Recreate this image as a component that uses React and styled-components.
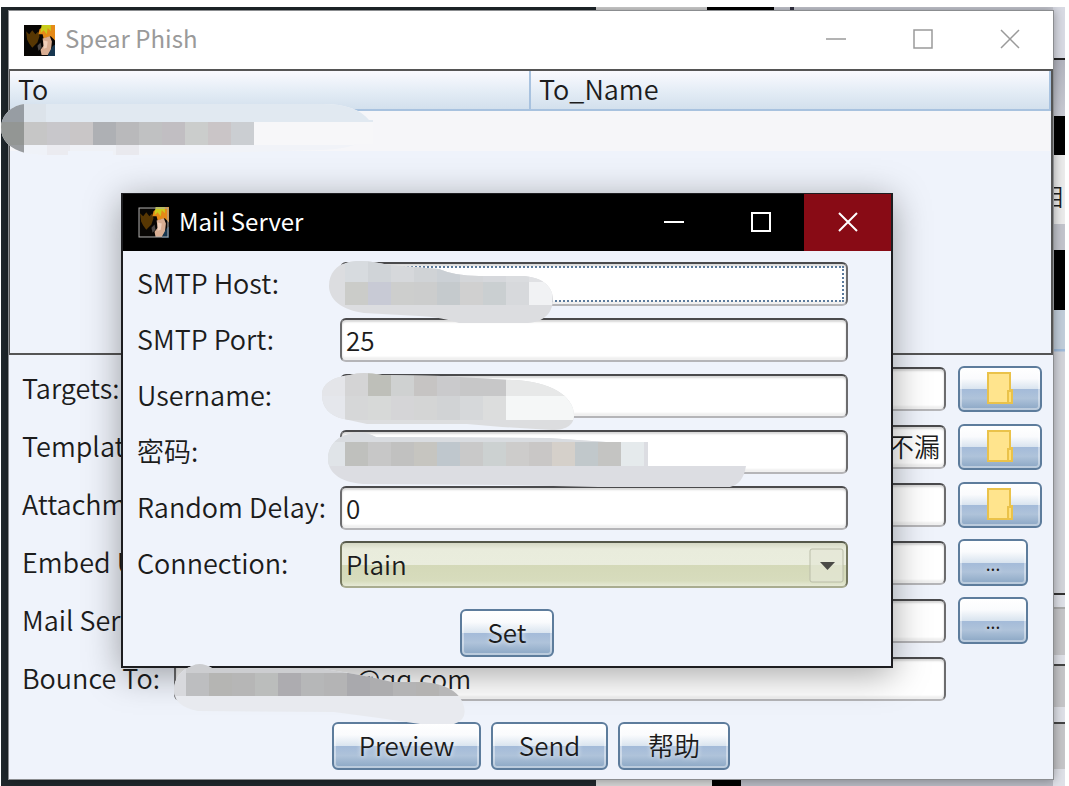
import React from "react";
import styled, { createGlobalStyle, css } from "styled-components";

const GlobalStyle = createGlobalStyle`
  * { box-sizing: border-box; }
  body { margin: 0; background: #fff; }
  body, button, input, select {
    font-family: "Noto Sans CJK SC", "Noto Sans", sans-serif;
    font-size: 26px;
    font-weight: 350;
    color: #1c1c1c;
  }
`;

const Desktop = styled.div`
  position: relative;
  min-height: calc(100vh - 7px);
  margin: 7px 4px 0 1px;
  padding: 3px 11px 6px 7px;
  overflow: hidden;
  background: linear-gradient(90deg, #20282c 595px, #d6d6d6 595px 711px, #000 711px 740px, #b9bbc4 740px);
`;

const BackdropTop = styled.div`
  position: absolute;
  top: 0;
  left: 0;
  right: 0;
  height: 3px;
  background: linear-gradient(90deg, #20282c 595px, #d6d6d6 595px 706px, #000 706px 773px, #c9cbd4 773px 789px, #334 789px 793px, #c9cbd4 793px);
`;

const BackdropEdge = styled.div`
  position: absolute;
  top: 0;
  right: 0;
  bottom: 0;
  width: 12px;
  background: linear-gradient(
    #d9dbe4 51px, #222 51px 53px, #b3b5bf 53px, #c9cbd4 109px,
    #000 109px 148px, #ececec 148px 217px, #c3c5cd 217px 243px,
    #000 243px 303px, #c2cedb 303px 342px, #9fbbdb 342px 344px,
    #d3d5db 345px 586px, #333 586px 588px, #dfe1e8 588px 600px,
    #aaa 600px 602px, #c6c6c9 602px 648px, #dfe1e8 648px 657px,
    #444 657px 659px, #c6c6c9 659px 700px, #dfe1e8 700px 715px,
    #444 715px 717px, #c6c6c9 717px 762px, #dfe1e8 762px
  );
`;

const BackdropText = styled.span`
  position: absolute;
  top: 177px;
  right: 2px;
  font-size: 24px;
  line-height: 24px;
`;

const Window = styled.section`
  position: relative;
  min-height: 770px;
  border: 1px solid #8b8d90;
  background: #eff3fb;
  box-shadow: 0 0 10px rgba(0, 0, 0, 0.35);
`;

const TitleBar = styled.header`
  display: flex;
  align-items: center;
  height: ${(p) => (p.$dark ? 57 : 58)}px;
  padding-left: 15px;
  background: ${(p) => (p.$dark ? "#000" : "#fff")};
  color: ${(p) => (p.$dark ? "#fff" : "#9a9a9a")};
`;

const Title = styled.h1`
  flex: 1;
  margin: 0 0 0 10px;
  padding-bottom: 4px;
  font-size: 24px;
  font-weight: 400;
  line-height: 32px;
`;

const CaptionButton = styled.button`
  display: flex;
  align-items: center;
  justify-content: center;
  align-self: stretch;
  width: 87px;
  padding: 0 0 2px;
  border: 0;
  background: ${(p) => (p.$danger ? "#880b15" : "transparent")};
  color: inherit;
`;

const Targets = styled.div`
  height: 286px;
  border: 1px solid #555;
  border-width: 2px 2px 2px 1px;
`;

const TargetTable = styled.table`
  width: 100%;
  border-collapse: collapse;
  table-layout: fixed;
`;

const HeadCell = styled.th`
  height: 39px;
  padding: 0 8px 3px;
  border-right: 2px solid #a8c2df;
  border-bottom: 2px solid #a8c2df;
  background: linear-gradient(#fafaff, #e3ecf5 55%, #d3e0ed);
  font-size: 27px;
  font-weight: 350;
  line-height: 34px;
  text-align: left;
`;

const Cell = styled.td`
  height: 41px;
  padding: 0;
  background: #f6f6f9;
`;

const Form = styled.form`
  display: grid;
  ${(p) =>
    p.$dialog
      ? css`
          grid-template-columns: 191px 1fr;
          grid-auto-rows: 44px;
          gap: 12px;
          padding: 11px 43px 0 14px;
        `
      : css`
          grid-template-columns: 140px 1fr 84px;
          grid-auto-rows: 47px;
          gap: 11px 12px;
          padding: 10px 11px 0 13px;
        `}
  align-items: center;
`;

const Label = styled.label`
  padding-bottom: 2px;
  font-size: 27px;
  line-height: 36px;
  white-space: nowrap;
`;

const Field = styled.div`
  position: relative;
  ${(p) =>
    p.$focused &&
    css`
      &::after {
        content: "";
        position: absolute;
        inset: 4px;
        border: 2px dotted #5b7a9c;
        pointer-events: none;
      }
    `}
`;

const box = css`
  display: block;
  width: 100%;
  border: 2px solid #6c6c6e;
  border-top-color: #4a4a4c;
  border-bottom-color: #b5b5b8;
  border-radius: 6px;
  outline: 0;
`;

const Input = styled.input`
  ${box}
  height: 44px;
  padding: 0 4px 2px ${(p) => p.$indent || 4}px;
  background: #fff;
  box-shadow: inset 0 2px 2px #d8d8d8, inset 0 -3px 2px #f0f0f0;
  text-align: ${(p) => p.$align || "left"};
`;

const Select = styled.select`
  ${box}
  height: 47px;
  padding: 0 44px 2px 4px;
  appearance: none;
  border-color: #55584a #74775f #a9ac90;
  background: linear-gradient(#d5d8c4, #e9ecdc 6px, #eaeddd 52%, #d4d9b8 52%, #d7dcbd 88%, #e6e9d6);
`;

const Arrow = styled.svg`
  position: absolute;
  top: 7px;
  right: 4px;
  pointer-events: none;
`;

const Button = styled.button`
  display: flex;
  align-items: center;
  justify-content: center;
  width: ${(p) => p.$width}px;
  height: ${(p) => p.$height || 48}px;
  padding: 0 0 2px;
  border: 2px solid #5d7c9c;
  border-radius: 6px;
  background: linear-gradient(#fff, #fafbfd 25%, #d9e4ef 50%, #a4bbd9 51%, #afc3da 72%, #8aa6c4);
  box-shadow: inset 0 0 0 2px rgba(255, 255, 255, 0.4);
  line-height: 36px;
  text-shadow: 0 0 5px rgba(255, 255, 255, 0.9);
`;

const Dots = styled.span`
  padding-top: 4px;
  font-size: 18px;
  font-family: "Noto Sans", sans-serif;
  font-weight: 400;
`;

const Actions = styled.div`
  display: flex;
  justify-content: center;
  gap: 10px;
  padding-top: ${(p) => (p.$dialog ? 23 : 20)}px;
`;

const Dialog = styled.section`
  position: absolute;
  z-index: 1;
  top: 182px;
  left: 112px;
  right: 160px;
  height: 475px;
  border: 2px solid #1d1d20;
  border-top-width: 1px;
  background: #eff3fb;
  box-shadow: 0 6px 34px rgba(0, 0, 0, 0.36);
`;

const SmudgeSvg = styled.svg`
  position: absolute;
  z-index: 2;
  left: ${(p) => p.$left}px;
  top: ${(p) => p.$top}px;
  pointer-events: none;
`;

function Smudge({ id, left, top, width, height, outline, base, rows }) {
  return (
    <SmudgeSvg $left={left} $top={top} width={width} height={height} aria-hidden="true">
      <clipPath id={id}>
        <path d={outline} />
      </clipPath>
      <g clipPath={`url(#${id})`} shapeRendering="crispEdges">
        <rect width={width} height={height} fill={base} />
        {rows.map((row) =>
          row.colors.map((color, i) => (
            <rect
              key={`${row.y}-${i}`}
              x={row.x + i * row.step}
              y={row.y}
              width={row.step}
              height={row.h}
              fill={color}
            />
          ))
        )}
      </g>
    </SmudgeSvg>
  );
}

const smudges = {
  target: {
    left: -8, top: 92, width: 372, height: 52, base: "#f1f3f8",
    outline: "M24 1H322C345 1 360 7 368 17H372V41H355Q345 46 320 47L134 52H112V48H67V52H45L24 50C10 46 0 38 0 25C0 12 11 2 24 1Z",
    rows: [
      { x: 0, y: 0, step: 23, h: 19, colors: ["#979da3", "#dce3ea"] },
      { x: 45, y: 0, step: 327, h: 19, colors: ["#e1e9f1"] },
      { x: 250, y: 19, step: 122, h: 23, colors: ["#f7f7f9"] },
      { x: 0, y: 19, step: 23, h: 23, colors: ["#939694", "#c6c6c6", "#c8c7cb", "#c9c6c7", "#aeb0b4", "#b9b9bb", "#c0c1c2", "#c1bec2", "#cbcdcc", "#cac5c7", "#cbced2"] },
      { x: 0, y: 42, step: 23, h: 10, colors: ["#999c9f", "#eff2f8", "#ebebf0", "#eff1f6", "#eff1f6", "#e9e9ee"] },
    ],
  },
  host: {
    left: -11, top: -1, width: 225, height: 64, base: "#dcdde0",
    outline: "M17 2C30 -2 45 1 60 4L110 8Q126 15 150 15H192C210 15 224 24 224 38C224 54 212 62 196 62H130Q112 56 90 55L35 52C12 49 0 38 0 25C0 12 8 4 17 2Z",
    rows: [
      { x: 16, y: 0, step: 23, h: 21, colors: ["#d7dbdf", "#d0d4d8", "#d6d8db", "#d0d3d6", "#cbd0d5", "#d4d6d9", "#d6d8dc", "#dadcdf", "#e0e1e4"] },
      { x: 16, y: 21, step: 23, h: 23, colors: ["#cbccc9", "#c8cad5", "#cdcecd", "#cccdcd", "#c5cacd", "#d0d0d0", "#cacfd1", "#d7d9dc", "#f1f2f4"] },
    ],
  },
  user: {
    left: -18, top: -2, width: 254, height: 64, base: "#dcdddf",
    outline: "M28 3Q40 -1 60 3L120 4L190 8C228 9 252 24 252 43C252 52 246 58 230 58L180 55L145 52H45L22 47C8 44 0 36 0 23C0 12 10 5 28 3Z",
    rows: [
      { x: 0, y: 0, step: 23, h: 24, colors: ["#e4e5e9", "#d4d4d5", "#bebfb9", "#cfd1d1", "#c6c4c3", "#cacacc", "#c7c7c8", "#c7c7c8", "#e7e8e8", "#e7e8e8", "#e7e8e8"] },
      { x: 0, y: 24, step: 23, h: 24, colors: ["#e5e7ec", "#d6d7d8", "#d7d9d8", "#d5d5d7", "#d4d5d5", "#d1d3d5", "#d6d8da", "#dcdddd", "#f5f7f7", "#f5f7f7", "#f5f7f7"] },
    ],
  },
  password: {
    left: -12, top: 1, width: 420, height: 58, base: "#dcdde2",
    outline: "M22 3Q34 -1 48 6L220 7L278 11H320V35H418C416 48 410 54 402 56H270L180 54L35 53C10 51 0 40 0 28C0 14 10 5 22 3Z",
    rows: [
      { x: 0, y: 0, step: 400, h: 11, colors: ["#d9dce0"] },
      { x: 0, y: 11, step: 17, h: 24, colors: ["#e0e4e8"] },
      { x: 17, y: 11, step: 23, h: 24, colors: ["#bfc0bd", "#c7c7c7", "#c1c1c0", "#c6c5c0", "#bfc7cd", "#c9c9c9", "#ccd1d1", "#cdcccb", "#c9c7c6", "#d5d0ca", "#c1c8cb", "#c4c4c2", "#e5eaec"] },
    ],
  },
  bounce: {
    left: 0, top: 6, width: 292, height: 62, base: "#e8eaef",
    outline: "M18 3Q26 -2 38 5L150 6Q190 12 218 19H250Q280 22 288 38Q296 56 280 61H246L205 55L160 49L24 48C8 45 0 38 0 27C0 15 8 6 18 3Z",
    rows: [
      { x: 0, y: 0, step: 12, h: 33, colors: ["#d8d9dd"] },
      { x: 12, y: 0, step: 160, h: 10, colors: ["#cccdd0"] },
      { x: 12, y: 10, step: 23, h: 23, colors: ["#bdbec0", "#b5b5b3", "#b6b6b6", "#bbbdbc", "#adacb0", "#b6b7b8", "#b4b4b5", "#a9a9ad", "#adadaf", "#b4b4b5", "#b4b3b2", "#b7b7b8"] },
    ],
  },
};

function Avatar({ framed }) {
  return (
    <svg width="31" height="31" viewBox="0 0 30 30" aria-hidden="true">
      <rect width="30" height="30" fill="#080604" />
      <path d="M2 6L5 9L8 5L11 9L14 6L15 11L13 17L8 22L5 18L3 14Z" fill="#573703" />
      <path d="M15 4L20 0H30V15L26 11L19 13L18 9L14 9Z" fill="#e58a18" />
      <path d="M17 0H26V6L23 3L22 9L19 5L16 8Z" fill="#c9cc1c" />
      <path d="M18 13L25 11L27 16L26 25L23 29H17L16 24L19 20Z" fill="#d9ae93" />
      <path d="M19 15L23 16L22 22L19 23Z" fill="#efcfba" />
      <path d="M24 27L28 20L30 19V30H23Z" fill="#173750" />
      <path d="M13 20L16 17L17 22L14 25Z" fill="#4d4846" />
      {framed && <rect x="1" y="1" width="28" height="28" fill="none" stroke="#aaa" />}
    </svg>
  );
}

const captionPaths = {
  Minimize: "M1 11H21",
  Maximize: "M2 2H20V20H2Z",
  Close: "M2 2L20 20M20 2L2 20",
};

function Caption({ title, dark }) {
  return (
    <TitleBar $dark={dark}>
      <Avatar framed={dark} />
      <Title>{title}</Title>
      {Object.entries(captionPaths).map(([name, d]) => (
        <CaptionButton key={name} type="button" aria-label={name} $danger={dark && name === "Close"}>
          <svg width="22" height="22" viewBox="0 0 22 22" fill="none" stroke="currentColor" strokeWidth={dark ? 2 : 1.5}>
            <path d={d} />
          </svg>
        </CaptionButton>
      ))}
    </TitleBar>
  );
}

function FolderIcon() {
  return (
    <svg width="26" height="32" viewBox="0 0 26 32" aria-hidden="true">
      <path d="M1 1H23V18H25V31H1Z" fill="#ffe48d" stroke="#eac24a" strokeWidth="2" />
      <rect x="21" y="19" width="4" height="12" fill="#ffe07a" stroke="#eac24a" strokeWidth="2" />
    </svg>
  );
}

const messageFields = [
  { id: "targets", label: "Targets:", browse: "folder" },
  { id: "template", label: "Template:", browse: "folder", value: "不漏", align: "right" },
  { id: "attachment", label: "Attachment:", browse: "folder" },
  { id: "embed", label: "Embed URL:", browse: "dots" },
  { id: "mail", label: "Mail Server:", browse: "dots" },
  { id: "bounce", label: "Bounce To:", value: "@qq.com", indent: 180, smudge: "bounce" },
];

const serverFields = [
  { id: "host", label: "SMTP Host:", smudge: "host", focused: true },
  { id: "port", label: "SMTP Port:", value: "25" },
  { id: "user", label: "Username:", smudge: "user" },
  { id: "password", label: "密码:", smudge: "password" },
  { id: "delay", label: "Random Delay:", value: "0" },
];

function FormField({ id, label, value = "", align, indent, smudge, focused }) {
  return (
    <>
      <Label htmlFor={id}>{label}</Label>
      <Field $focused={focused}>
        <Input id={id} type="text" defaultValue={value} $align={align} $indent={indent} />
        {smudge && <Smudge {...smudges[smudge]} id={`smudge-${smudge}`} />}
      </Field>
    </>
  );
}

function MailServerDialog() {
  return (
    <Dialog role="dialog" aria-label="Mail Server">
      <Caption title="Mail Server" dark />
      <Form $dialog>
        {serverFields.map((f) => (
          <FormField key={f.id} {...f} />
        ))}
        <Label htmlFor="connection">Connection:</Label>
        <Field>
          <Select id="connection" defaultValue="Plain">
            <option>Plain</option>
          </Select>
          <Arrow width="35" height="35" viewBox="0 0 35 35" aria-hidden="true">
            <rect x="1" y="1" width="33" height="33" rx="2" fill="#e4e7d6" fillOpacity="0.7" stroke="#babda8" />
            <path d="M11 14H26L18.500 22Z" fill="#4a4a46" />
          </Arrow>
        </Field>
      </Form>
      <Actions $dialog>
        <Button type="button" $width={94}>Set</Button>
      </Actions>
    </Dialog>
  );
}

export default function App() {
  return (
    <>
      <GlobalStyle />
      <Desktop>
        <BackdropTop />
        <BackdropEdge>
          <BackdropText>相</BackdropText>
        </BackdropEdge>
        <Window>
          <Caption title="Spear Phish" />
          <Targets>
            <TargetTable>
              <thead>
                <tr>
                  <HeadCell scope="col">To</HeadCell>
                  <HeadCell scope="col">To_Name</HeadCell>
                </tr>
              </thead>
              <tbody>
                <tr>
                  <Cell />
                  <Cell />
                </tr>
              </tbody>
            </TargetTable>
          </Targets>
          <Form>
            {messageFields.map(({ browse, ...f }) => (
              <React.Fragment key={f.id}>
                <FormField {...f} />
                {browse === "folder" && (
                  <Button type="button" $width={84} $height={46} aria-label={`Browse ${f.id}`}>
                    <FolderIcon />
                  </Button>
                )}
                {browse === "dots" && (
                  <Button type="button" $width={70} $height={47}>
                    <Dots>...</Dots>
                  </Button>
                )}
                {!browse && <span />}
              </React.Fragment>
            ))}
          </Form>
          <Actions>
            <Button type="button" $width={149}>Preview</Button>
            <Button type="button" $width={117}>Send</Button>
            <Button type="button" $width={112}>帮助</Button>
          </Actions>
          <MailServerDialog />
          <Smudge id="smudge-target" {...smudges.target} />
        </Window>
      </Desktop>
    </>
  );
}
